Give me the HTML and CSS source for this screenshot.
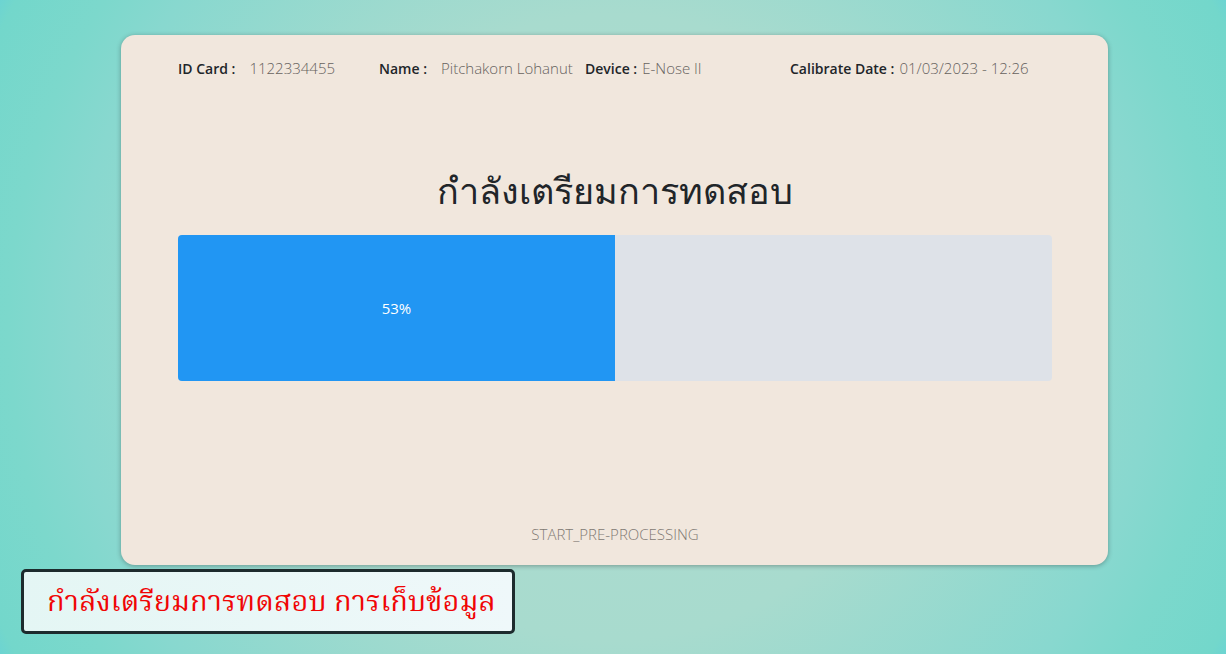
FILE: index.html
```html
<!DOCTYPE html>
<html lang="th">
<head>
<meta charset="utf-8">
<meta name="viewport" content="width=device-width, initial-scale=1">
<title>E-Nose</title>
<link rel="stylesheet" href="styles.css">
</head>
<body>
<main class="card">
  <dl class="info">
    <div class="field"><dt>ID Card :</dt><dd>1122334455</dd></div>
    <div class="field"><dt>Name :</dt><dd>Pitchakorn Lohanut</dd></div>
    <div class="field field-tight"><dt>Device :</dt><dd>E-Nose II</dd></div>
    <div class="field field-tight"><dt>Calibrate Date :</dt><dd>01/03/2023 - 12:26</dd></div>
  </dl>
  <h1 class="title" id="title">กำลังเตรียมการทดสอบ</h1>
  <div class="progress" role="progressbar" aria-labelledby="title" aria-valuenow="53" aria-valuemin="0" aria-valuemax="100">
    <div class="bar">53%</div>
  </div>
  <p class="status">START_PRE-PROCESSING</p>
</main>
<aside class="caption">กำลังเตรียมการทดสอบ การเก็บข้อมูล</aside>
</body>
</html>
```

FILE: styles.css
```css
* { box-sizing: border-box; }
body {
  margin: 0;
  min-height: 100vh;
  padding: 35px 118px 20px 121px;
  display: flex;
  flex-direction: column;
  color: #212529;
  font: 15px/24px "Open Sans", "Noto Sans", sans-serif;
  background: radial-gradient(circle at 50% 50%, #aedbd0 0%, #a8dbce 45%, #88d8cf 78%, #7cd8cc 87%, #73d7cb 98%, #6cd4d2 100%);
}
.card {
  flex: 1;
  display: flex;
  flex-direction: column;
  padding: 21px 56px 19px 57px;
  border-radius: 14px;
  background: #f1e7dd;
  box-shadow: 0 1px 5px rgba(0, 0, 0, 0.3);
}
.info { display: grid; grid-template-columns: 201fr 206fr 205fr 262fr; margin: 0; white-space: nowrap; }
.field { display: flex; align-items: baseline; gap: 14px; }
.field-tight { gap: 5px; }
dt { font-size: 14px; font-weight: 600; }
dd { margin: 0; color: #66625e; font-weight: 300; }
.title { margin: 86px 0 20px; text-align: center; font-weight: 400; font-size: 36px; line-height: 48px; }
.progress { height: 146px; overflow: hidden; border-radius: 4px; background: #dee2e8; }
.bar { display: flex; width: 50%; height: 100%; align-items: center; justify-content: center; color: #fff; background: #2196f3; }
.status { margin: auto 0 0; text-align: center; color: #7f7973; font-weight: 300; }
.caption {
  align-self: flex-start;
  margin: 4px 0 0 -100px;
  padding: 9px 16px 6px 23px;
  border: 3px solid #1d2b2d;
  border-radius: 5px;
  background: linear-gradient(90deg, #e4f6f4, #eff8fa);
  color: #f00505;
  font-family: "Noto Serif Thai", "Liberation Serif", serif;
  font-size: 29px;
  line-height: 44px;
  white-space: nowrap;
}
```
